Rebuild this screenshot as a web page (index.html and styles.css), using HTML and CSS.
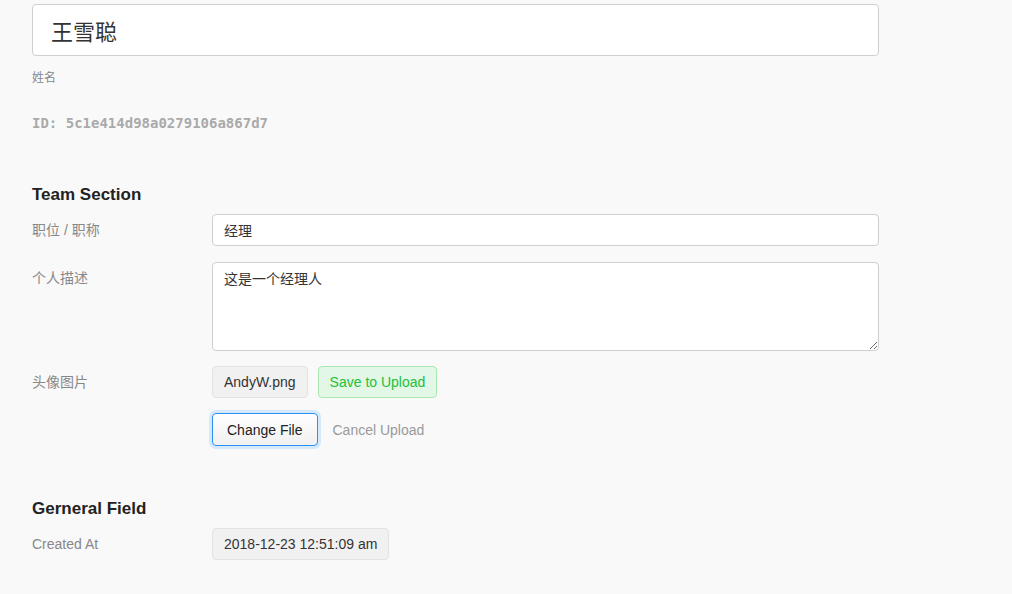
FILE: index.html
```html
<!DOCTYPE html>
<html lang="zh">
<head>
<meta charset="utf-8">
<title>Profile</title>
<link rel="stylesheet" href="styles.css">
</head>
<body>
<div class="page">
  <div class="name-block">
    <input class="name-input" type="text" value="王雪聪">
    <div class="hint">姓名</div>
    <div class="id-line">ID: 5c1e414d98a0279106a867d7</div>
  </div>

  <h3 class="section-title">Team Section</h3>
  <div class="row">
    <div class="label">职位 / 职称</div>
    <div class="control"><input class="text-input" type="text" value="经理"></div>
  </div>
  <div class="row">
    <div class="label">个人描述</div>
    <div class="control"><textarea class="text-area">这是一个经理人</textarea></div>
  </div>
  <div class="row row-upload">
    <div class="label">头像图片</div>
    <div class="control">
      <div class="btn-line">
        <span class="btn btn-plain">AndyW.png</span>
        <span class="btn btn-green">Save to Upload</span>
      </div>
      <div class="btn-line">
        <span class="btn btn-focus">Change File</span>
        <span class="btn-link">Cancel Upload</span>
      </div>
    </div>
  </div>

  <h3 class="section-title second">Gerneral Field</h3>
  <div class="row">
    <div class="label">Created At</div>
    <div class="control"><span class="btn btn-plain">2018-12-23 12:51:09 am</span></div>
  </div>
</div>
</body>
</html>
```

FILE: styles.css
```css
* { box-sizing: border-box; }
html, body {
  margin: 0;
  padding: 0;
  background: #f9f9f9;
}
body {
  font-family: "Liberation Sans", "Noto Sans CJK SC", sans-serif;
  font-size: 14px;
  color: #333;
}
.page {
  padding: 4px 0 0 32px;
  width: 879px;
}
.name-input {
  display: block;
  width: 847px;
  height: 52px;
  border: 1px solid #cfcfcf;
  border-radius: 4px;
  background: #fff;
  padding: 0 18px;
  font-family: "Liberation Sans", "Noto Sans CJK SC", sans-serif;
  font-size: 22px;
  color: #333;
  outline: none;
}
.hint {
  margin-top: 14px;
  font-size: 12px;
  line-height: 16px;
  color: #888;
}
.id-line {
  margin-top: 28px;
  font-family: "DejaVu Sans Mono", "Liberation Mono", monospace;
  font-weight: bold;
  font-size: 14px;
  line-height: 18px;
  color: #aaa;
}
.section-title {
  margin: 51px 0 0;
  font-size: 17px;
  line-height: 24px;
  font-weight: bold;
  color: #222;
}
.section-title.second {
  margin-top: 51px;
}
.row {
  display: flex;
  margin-top: 16px;
}
.row.row-upload { margin-top: 15px; }
.section-title + .row { margin-top: 7px; }
.label {
  width: 180px;
  flex: none;
  color: #888;
  font-size: 14px;
  line-height: 20px;
  padding-top: 6px;
}
.control {
  flex: 1;
  display: flex;
  flex-direction: column;
  align-items: flex-start;
}
.text-input, .text-area {
  display: block;
  width: 667px;
  border: 1px solid #cfcfcf;
  border-radius: 4px;
  background: #fff;
  padding: 0 11px;
  font-family: "Liberation Sans", "Noto Sans CJK SC", sans-serif;
  font-size: 14px;
  color: #333;
  outline: none;
}
.text-input { height: 32px; }
.text-area {
  height: 89px;
  padding-top: 6px;
  line-height: 20px;
  resize: vertical;
}
.btn-line {
  display: flex;
  align-items: center;
  gap: 10px;
}
.btn-line + .btn-line { margin-top: 15px; }
.btn {
  display: inline-flex;
  align-items: center;
  height: 32px;
  padding: 0 11px;
  border-radius: 4px;
  font-size: 14px;
  white-space: nowrap;
}
.btn-plain {
  background: #f1f1f1;
  border: 1px solid #e3e3e3;
  color: #333;
}
.btn-green {
  background: #e2f7e5;
  border: 1px solid #a9e8b3;
  color: #23c03b;
}
.btn-focus {
  height: 33px;
  padding: 0 14px;
  background: linear-gradient(#ffffff, #f0f0f0);
  border: 1px solid #2a8ff7;
  box-shadow: 0 0 0 3px #d6e9fb;
  color: #222;
}
.btn-link {
  margin-left: 5px;
  color: #999;
  font-size: 14px;
}
```
